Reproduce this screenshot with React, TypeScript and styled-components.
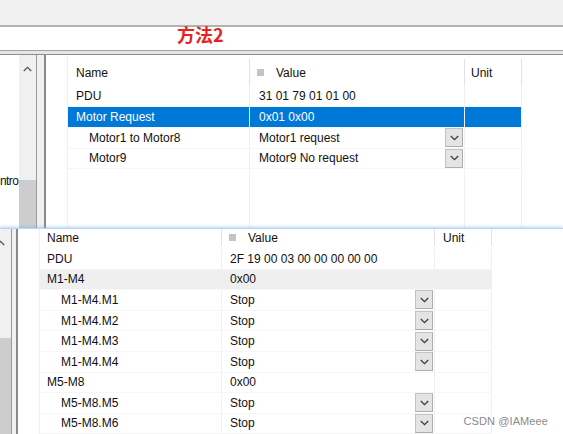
import React from 'react';
import styled, { createGlobalStyle } from 'styled-components';

const GlobalStyle = createGlobalStyle`
  html, body { margin: 0; padding: 0; background: #ffffff; }
  body {
    width: 563px; height: 434px; overflow: hidden;
    font-family: "Liberation Sans", Arial, sans-serif;
    font-size: 12px; color: #111;
  }
  * { box-sizing: border-box; }
`;

const Page = styled.div`
  position: relative;
  width: 563px;
  height: 434px;
  overflow: hidden;
  display: flex;
  flex-direction: column;
  background: #fff;
`;

const Shot = styled.section<{ $h: number }>`
  flex: none;
  height: ${(p) => p.$h}px;
  display: flex;
  flex-direction: column;
  overflow: hidden;
  position: relative;
`;

const LowerShot = styled(Shot)`
  border-top: 1px solid #b9d7f3;
  box-shadow: 0 -1px 3px rgba(120, 175, 235, 0.55);
  background: linear-gradient(#e4f0fb, #ffffff 4px);
`;

const TopBar = styled.div`
  flex: none;
  height: 27px;
  background: #f0f0f0;
  border-bottom: 2px solid #b2b2b2;
`;

const TitleStrip = styled.div`
  flex: none;
  height: 23px;
  background: #fff;
  display: flex;
  align-items: flex-start;
  padding-left: 177px;
`;

const Note = styled.span`
  font-family: "Noto Sans CJK SC", "Noto Sans", sans-serif;
  font-weight: 700;
  font-size: 18px;
  line-height: 15px;
  color: #e8231f;
`;

const FloatingNote = styled(Note)`
  position: absolute;
  left: 337px;
  top: 306px;
  line-height: 16px;
`;

const Separator = styled.div`
  flex: none;
  height: 5px;
  border-top: 1px solid #a2a2a2;
  border-bottom: 1px solid #8e8e8e;
  background: #e6e6e6;
`;

const Workspace = styled.div`
  flex: 1;
  display: flex;
  min-height: 0;
`;

const TreePane = styled.div`
  flex: none;
  width: 19px;
  background: #fff;
  padding-top: 119px;
  overflow: hidden;
  white-space: nowrap;
  letter-spacing: -0.6px;
`;

const ScrollTrack = styled.div<{ $w: number; $thumb: number; $arrowShift: number }>`
  flex: none;
  width: ${(p) => p.$w}px;
  background: #f0f0f0;
  display: flex;
  flex-direction: column;
  justify-content: space-between;
  overflow: hidden;

  & > svg {
    margin: 11px 0 0 ${(p) => p.$arrowShift}px;
  }
  &::after {
    content: "";
    display: block;
    height: ${(p) => p.$thumb}px;
    background: #cdcdcd;
  }
`;

const Splitter = styled.div<{ $w: number }>`
  flex: none;
  width: ${(p) => p.$w}px;
  border-left: 1px solid #9c9c9c;
  border-right: 2px solid #8a8a8a;
  background: #f0f0f0;
`;

const GridPane = styled.div`
  flex: 1;
  background: #fff;
  padding-left: 21px;
  display: flex;
  min-width: 0;
`;

const Grid = styled.div`
  display: flex;
  flex-direction: column;
  border-left: 1px solid #f0f0f0;
`;

const HeaderRow = styled.div<{ $h: number; $pt: number; $pb: number }>`
  flex: none;
  display: flex;
  height: ${(p) => p.$h}px;
  padding-top: ${(p) => p.$pt}px;
  padding-bottom: ${(p) => p.$pb}px;
`;

const HeaderCell = styled.div<{ $w: number; $pl: number }>`
  flex: none;
  width: ${(p) => p.$w}px;
  padding-left: ${(p) => p.$pl}px;
  border-right: 1px solid #e3e3e3;
  display: flex;
  align-items: center;
  color: #111;
`;

const SortMark = styled.span`
  display: inline-block;
  width: 7px;
  height: 7px;
  background: #c4c4c4;
  margin-right: 12px;
`;

const DataRow = styled.div<{ $h: number; $tone?: 'selected' | 'hover' }>`
  flex: none;
  display: flex;
  height: ${(p) => p.$h}px;
  border-bottom: 1px solid #f6f6f6;
  background: ${(p) =>
    p.$tone === 'selected' ? '#0078d7' : p.$tone === 'hover' ? '#efefef' : 'transparent'};
  color: ${(p) => (p.$tone === 'selected' ? '#ffffff' : '#111')};
`;

const FillerRow = styled.div`
  flex: 1;
  display: flex;
`;

const Cell = styled.div<{ $w: number; $pl: number }>`
  flex: none;
  width: ${(p) => p.$w}px;
  padding-left: ${(p) => p.$pl}px;
  border-right: 1px solid #f0f0f0;
  display: flex;
  align-items: center;
  white-space: nowrap;
  overflow: hidden;
`;

const CellText = styled.span`
  flex: 1;
  overflow: hidden;
`;

const DropBtn = styled.span`
  flex: none;
  width: 18px;
  height: 19px;
  margin-right: 1px;
  background: #e4e4e4;
  border: 1px solid #c2c2c2;
  border-right-color: #adadad;
  border-bottom-color: #adadad;
  display: flex;
  align-items: center;
  justify-content: center;
`;

const Watermark = styled.span`
  position: absolute;
  right: 15px;
  bottom: 6px;
  font-family: "Liberation Sans", Arial, sans-serif;
  font-size: 11px;
  line-height: 13px;
  color: #8a8a8a;
  letter-spacing: 0.1px;
`;

type Row = {
  name: string;
  value: string;
  child?: boolean;
  drop?: boolean;
  tone?: 'selected' | 'hover';
};

type GridSpec = {
  cols: [number, number, number];
  headerH: number;
  headerPt: number;
  headerPb: number;
  rowH: number[];
  pad: { name: number; value: number; unit: number; mark: number; indent: number };
  rows: Row[];
  filler?: boolean;
};

const Chevron = ({ up }: { up?: boolean }) => (
  <svg width="9" height="6" viewBox="0 0 9 6" aria-hidden="true">
    <polyline
      points={up ? '0.8,5 4.5,1.3 8.2,5' : '0.8,1 4.5,4.7 8.2,1'}
      fill="none"
      stroke={up ? '#555' : '#3c3c3c'}
      strokeWidth="1.3"
    />
  </svg>
);

const PropertyGrid = ({ spec }: { spec: GridSpec }) => {
  const [wName, wValue, wUnit] = spec.cols;
  const { pad } = spec;
  return (
    <Grid>
      <HeaderRow $h={spec.headerH} $pt={spec.headerPt} $pb={spec.headerPb}>
        <HeaderCell $w={wName} $pl={pad.name}>Name</HeaderCell>
        <HeaderCell $w={wValue} $pl={pad.mark}>
          <SortMark />
          Value
        </HeaderCell>
        <HeaderCell $w={wUnit} $pl={pad.unit}>Unit</HeaderCell>
      </HeaderRow>
      {spec.rows.map((r, i) => (
        <DataRow key={r.name} $h={spec.rowH[i]} $tone={r.tone}>
          <Cell $w={wName} $pl={pad.name + (r.child ? pad.indent : 0)}>
            <CellText>{r.name}</CellText>
          </Cell>
          <Cell $w={wValue} $pl={pad.value}>
            <CellText>{r.value}</CellText>
            {r.drop && (
              <DropBtn>
                <Chevron />
              </DropBtn>
            )}
          </Cell>
          <Cell $w={wUnit} $pl={pad.unit} />
        </DataRow>
      ))}
      {spec.filler && (
        <FillerRow>
          <Cell $w={wName} $pl={0} />
          <Cell $w={wValue} $pl={0} />
          <Cell $w={wUnit} $pl={0} />
        </FillerRow>
      )}
    </Grid>
  );
};

const method2: GridSpec = {
  cols: [182, 215, 57],
  headerH: 31,
  headerPt: 4,
  headerPb: 0,
  rowH: [21, 21, 20.5, 20.5],
  pad: { name: 8, value: 9, unit: 6, mark: 7, indent: 13 },
  filler: true,
  rows: [
    { name: 'PDU', value: '31 01 79 01 01 00' },
    { name: 'Motor Request', value: '0x01 0x00', tone: 'selected' },
    { name: 'Motor1 to Motor8', value: 'Motor1 request', child: true, drop: true },
    { name: 'Motor9', value: 'Motor9 No request', child: true, drop: true },
  ],
};

const method1: GridSpec = {
  cols: [182, 213, 57],
  headerH: 20,
  headerPt: 0,
  headerPb: 3,
  rowH: [20.6, 20.6, 20.6, 20.6, 20.6, 20.6, 20.6, 20.6, 20.2],
  pad: { name: 7, value: 8, unit: 8, mark: 7, indent: 14 },
  rows: [
    { name: 'PDU', value: '2F 19 00 03 00 00 00 00 00' },
    { name: 'M1-M4', value: '0x00', tone: 'hover' },
    { name: 'M1-M4.M1', value: 'Stop', child: true, drop: true },
    { name: 'M1-M4.M2', value: 'Stop', child: true, drop: true },
    { name: 'M1-M4.M3', value: 'Stop', child: true, drop: true },
    { name: 'M1-M4.M4', value: 'Stop', child: true, drop: true },
    { name: 'M5-M8', value: '0x00' },
    { name: 'M5-M8.M5', value: 'Stop', child: true, drop: true },
    { name: 'M5-M8.M6', value: 'Stop', child: true, drop: true },
  ],
};

export default function App() {
  return (
    <>
      <GlobalStyle />
      <Page>
        <Shot $h={228}>
          <TopBar />
          <TitleStrip>
            <Note>方法2</Note>
          </TitleStrip>
          <Separator />
          <Workspace>
            <TreePane>ntro</TreePane>
            <ScrollTrack $w={17} $thumb={48} $arrowShift={4}>
              <Chevron up />
            </ScrollTrack>
            <Splitter $w={10} />
            <GridPane>
              <PropertyGrid spec={method2} />
            </GridPane>
          </Workspace>
        </Shot>
        <LowerShot $h={206}>
          <Workspace>
            <ScrollTrack $w={11} $thumb={96} $arrowShift={-4}>
              <Chevron up />
            </ScrollTrack>
            <Splitter $w={7} />
            <GridPane>
              <PropertyGrid spec={method1} />
            </GridPane>
          </Workspace>
          <FloatingNote>方法1</FloatingNote>
          <Watermark>CSDN @IAMeee</Watermark>
        </LowerShot>
      </Page>
    </>
  );
}
